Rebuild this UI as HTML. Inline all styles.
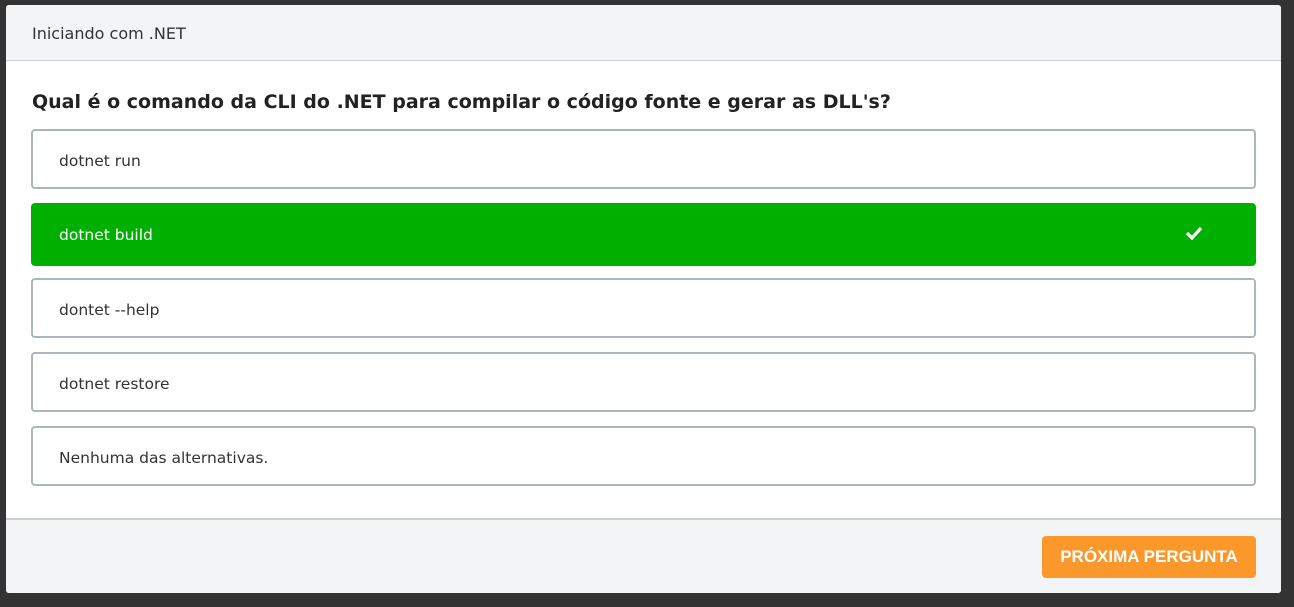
<!DOCTYPE html><html><head><style>
body{margin:0;width:1294px;height:607px;background:#333;font-family:"DejaVu Sans","Liberation Sans",sans-serif;position:relative;overflow:hidden}
.card{position:absolute;left:6px;top:5px;width:1275px;height:588px;background:#fff;border-radius:3px;overflow:hidden}
.hd{height:56px;background:#f3f4f5;border-bottom:1px solid #ccd0d4;box-sizing:border-box;padding-left:26px;line-height:58px;font-size:16px;color:#333}
.q{position:absolute;left:26px;top:86px;font-size:19px;font-weight:bold;color:#222;letter-spacing:0px}
.o{position:absolute;left:25px;width:1225px;height:60px;box-sizing:border-box;border:2px solid #adb5bd;border-radius:4px;padding-left:26px;line-height:60px;font-size:15.5px;color:#333}
.g{background:#00b000;border-color:#00b000;color:#fff;height:63px;line-height:61px}
.ft{position:absolute;left:0;top:513px;width:100%;height:75px;background:#f3f4f5;border-top:2px solid #ccd0d4;box-sizing:border-box}
.btn{position:absolute;left:1036px;top:16px;width:214px;height:42px;background:#fa982c;border-radius:4px;color:#fff;font-weight:bold;font-size:17px;text-align:center;line-height:42px;font-family:"Liberation Sans",sans-serif}
</style></head><body><div class="card">
<div class="hd">Iniciando com .NET</div>
<div class="q">Qual é o comando da CLI do .NET para compilar o código fonte e gerar as DLL's?</div>
<div class="o" style="top:124px">dotnet run</div>
<div class="o g" style="top:198px">dotnet build<svg style="position:absolute;left:1152px;top:20px" width="18" height="15" viewBox="0 0 18 15"><path d="M2 8l5 5 9-10" stroke="#fff" stroke-width="3.2" fill="none"/></svg></div>
<div class="o" style="top:273px">dontet --help</div>
<div class="o" style="top:347px">dotnet restore</div>
<div class="o" style="top:421px">Nenhuma das alternativas.</div>
<div class="ft"><div class="btn">PRÓXIMA PERGUNTA</div></div>
</div></body></html>
